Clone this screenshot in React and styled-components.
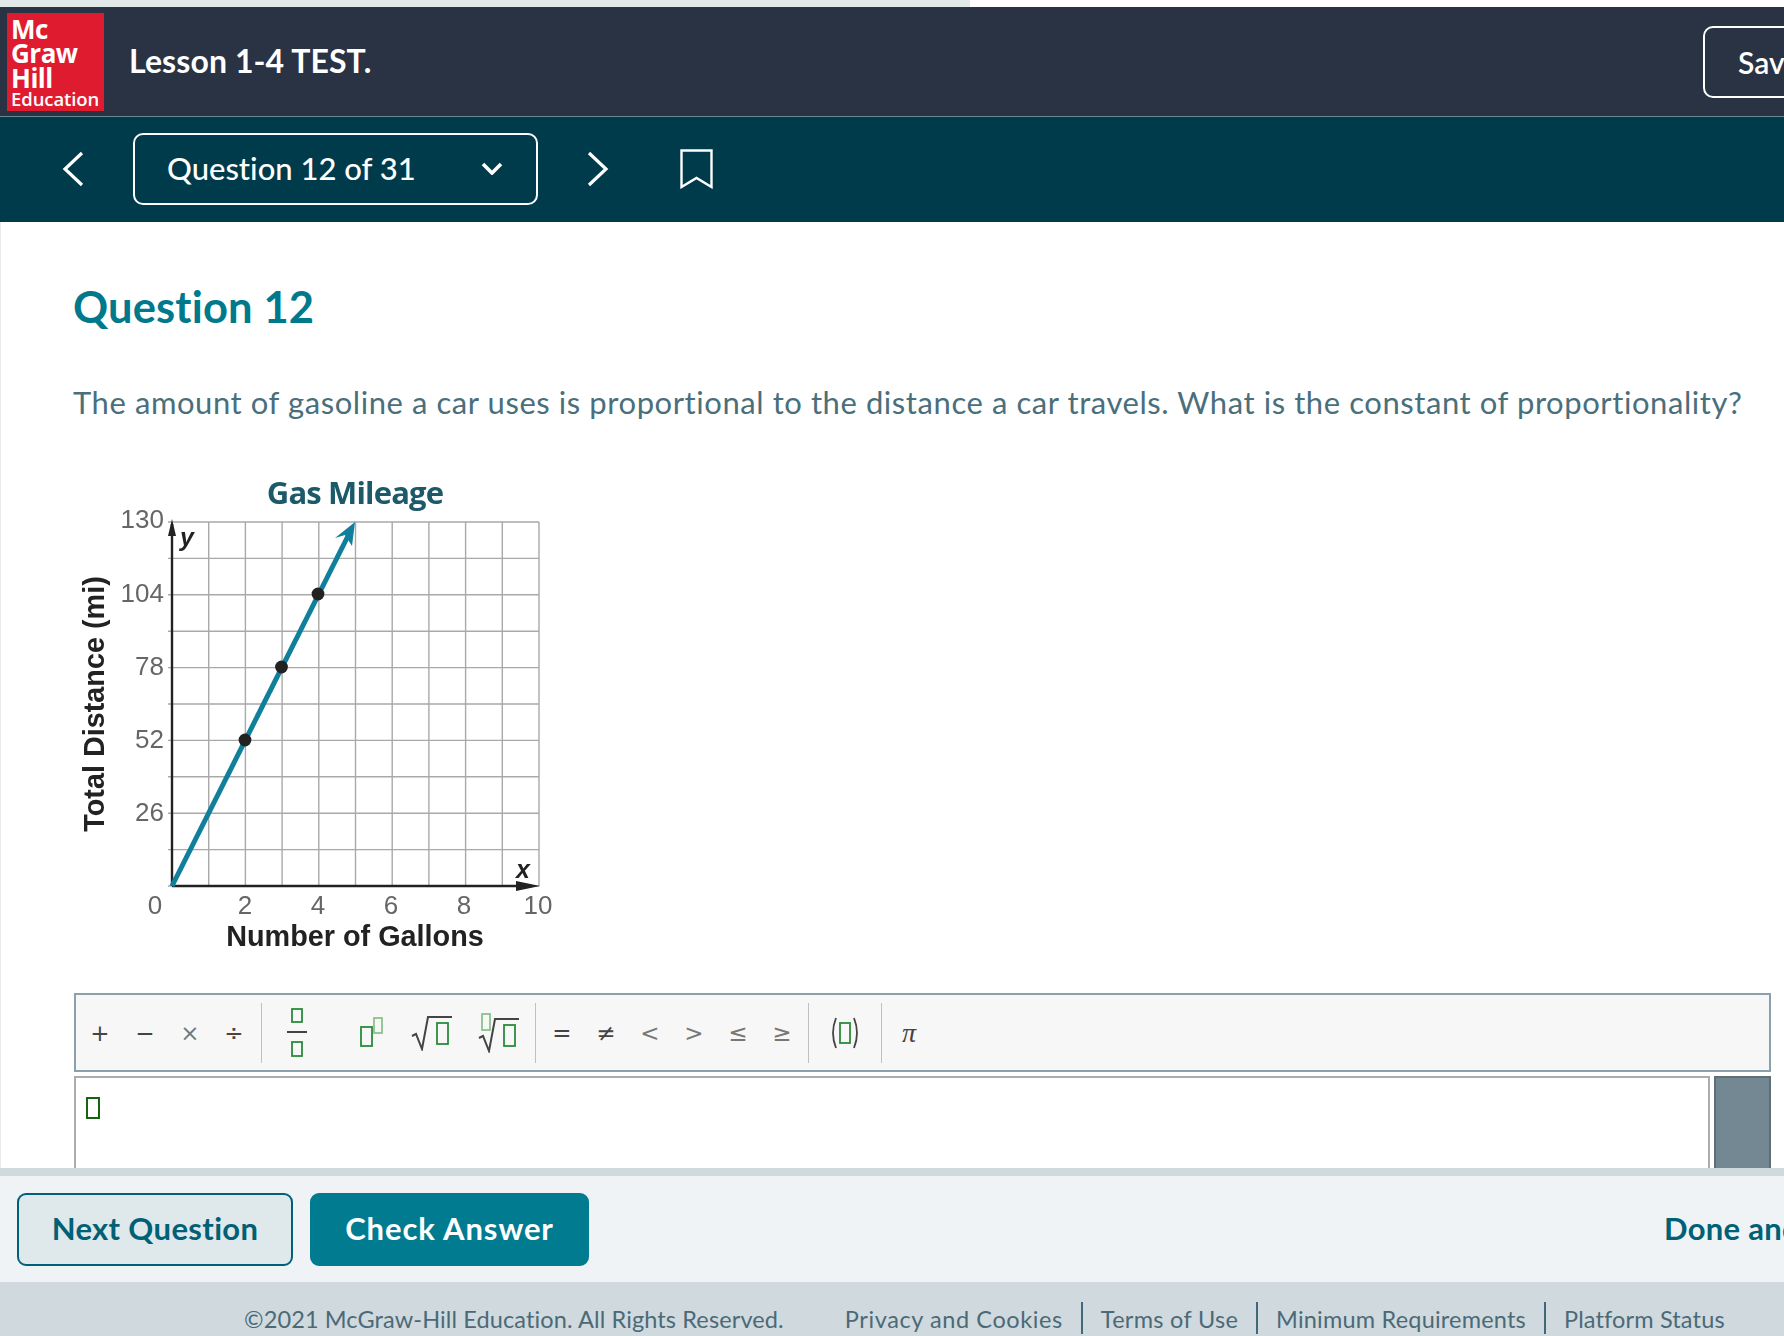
import React from 'react';
import styled, { createGlobalStyle } from 'styled-components';

const FONT = `Lato, "Open Sans", "Liberation Sans", sans-serif`;

const GlobalStyle = createGlobalStyle`
  html, body {
    margin: 0;
    padding: 0;
    background: #fff;
    overflow: hidden;
  }
  * { box-sizing: border-box; }
`;

const Page = styled.div`
  width: 1784px;
  height: 1336px;
  display: flex;
  flex-direction: column;
  overflow: hidden;
  font-family: ${FONT};
  font-variant-ligatures: none;
`;

const TopStrip = styled.div`
  height: 7px;
  flex: none;
  background: #fff;
`;

const Progress = styled.div`
  width: 970px;
  height: 100%;
  background: #e3e8e9;
`;

const Header = styled.header`
  height: 110px;
  flex: none;
  display: flex;
  align-items: center;
  padding-left: 7px;
  background: #2a3343;
  border-bottom: 1px solid #6d8791;
`;

const Logo = styled.div`
  width: 97px;
  height: 98px;
  flex: none;
  padding: 4px 0 0 4px;
  background: #df1b2f;
  color: #fff;
  font-family: "Open Sans", sans-serif;
  font-weight: 700;
  font-size: 26px;
  line-height: 24.5px;
  letter-spacing: -0.5px;
`;

const LogoSmall = styled.div`
  font-size: 18.5px;
  font-weight: 600;
  line-height: 17px;
  letter-spacing: -0.1px;
`;

const LessonTitle = styled.h1`
  flex: 1;
  margin: -2px 0 0 25px;
  color: #fff;
  font-size: 32px;
  font-weight: 700;
  letter-spacing: 0.1px;
`;

const SaveButton = styled.div`
  flex: none;
  width: 200px;
  height: 72px;
  margin-right: -119px;
  padding-left: 33px;
  display: flex;
  align-items: center;
  border: 2px solid #fff;
  border-radius: 10px;
  color: #fff;
  font-size: 30px;
  font-weight: 600;
  white-space: nowrap;
`;

const QuestionNav = styled.nav`
  height: 105px;
  flex: none;
  display: flex;
  align-items: center;
  gap: 49px;
  padding: 0 0 1px 62px;
  background: #003b4c;
`;

const QuestionSelect = styled.div`
  width: 405px;
  height: 72px;
  display: flex;
  align-items: center;
  justify-content: space-between;
  padding: 0 33px 2px 32px;
  border: 2px solid #fff;
  border-radius: 10px;
  color: #fff;
  font-size: 31px;
  font-weight: 500;
`;

const Bookmark = styled.svg`
  margin-left: 22px;
`;

const Content = styled.main`
  flex: 1;
  min-height: 0;
  overflow: hidden;
  padding: 0 13px 0 73px;
  background: #fff;
  border-left: 1px solid #e9eced;
`;

const QuestionHeading = styled.h2`
  margin: 62px 0 0 -1px;
  color: #00798c;
  font-size: 43.5px;
  line-height: 44px;
  font-weight: 700;
  letter-spacing: 0.15px;
`;

const QuestionText = styled.p`
  margin: 54px 0 0 -1px;
  color: #4a6f7c;
  font-size: 31px;
  line-height: 40px;
  letter-spacing: 0.57px;
  white-space: nowrap;
`;

const ChartFigure = styled.svg`
  display: block;
  margin-top: 48px;
  filter: blur(0.4px);
  font-family: "Liberation Sans", sans-serif;
`;

const Toolbar = styled.div`
  margin-top: 33px;
  height: 79px;
  display: flex;
  align-items: center;
  padding-left: 2px;
  background: #f7f7f7;
  border: 2px solid #8ba0ab;
`;

const ToolGroup = styled.div`
  display: flex;
  align-items: center;
  padding: 0 ${p => p.$after}px 0 ${p => p.$before}px;
`;

const ToolButton = styled.div`
  width: ${p => p.$w}px;
  height: 60px;
  flex: none;
  display: flex;
  align-items: center;
  justify-content: center;
  padding-left: ${p => p.$shift || 0}px;
  color: ${p => (p.$light ? '#777' : '#444')};
  font-family: "DejaVu Sans", sans-serif;
  font-size: 23px;
`;

const PiGlyph = styled.span`
  font-family: "Liberation Serif", serif;
  font-style: italic;
  font-size: 28px;
`;

const ToolDivider = styled.div`
  width: 1px;
  height: 60px;
  flex: none;
  background: #bcc1c3;
`;

const EditorRow = styled.div`
  margin-top: 4px;
  display: flex;
  gap: 4px;
  height: 130px;
`;

const Editor = styled.div`
  flex: 1;
  padding: 19px 0 0 10px;
  background: #fff;
  border: 2px solid #a9adae;
`;

const Placeholder = styled.div`
  width: 14px;
  height: 22px;
  border: 2px solid #14650f;
`;

const SideBlock = styled.div`
  width: 57px;
  background: #748893;
  border: 2px solid #5f6f78;
`;

const Divider = styled.div`
  height: 8px;
  flex: none;
  background: #d0d9dd;
`;

const ActionBar = styled.div`
  height: 106px;
  flex: none;
  display: flex;
  align-items: center;
  gap: 17px;
  padding-left: 17px;
  background: #eff3f5;
`;

const ActionButton = styled.div`
  width: ${p => p.$w}px;
  height: 73px;
  display: flex;
  align-items: center;
  justify-content: center;
  padding-bottom: 3px;
  border: 2px solid ${p => (p.$primary ? '#007b90' : '#00607a')};
  border-radius: 9px;
  background: ${p => (p.$primary ? '#007b90' : '#dfe8eb')};
  color: ${p => (p.$primary ? '#fff' : '#006075')};
  font-size: 31px;
  font-weight: 700;
  letter-spacing: ${p => (p.$primary ? '0.9px' : '0.35px')};
`;

const DoneLink = styled.div`
  flex: none;
  width: 240px;
  margin: 0 -120px 3px auto;
  color: #006075;
  font-size: 31px;
  font-weight: 700;
  letter-spacing: 0.3px;
  white-space: nowrap;
`;

const Footer = styled.footer`
  height: 54px;
  flex: none;
  display: flex;
  align-items: flex-end;
  padding: 0 0 2px 244px;
  background: #d0d9dd;
  color: #4a6a78;
  font-size: 23.5px;
  letter-spacing: 0.12px;
  white-space: nowrap;
`;

const Copyright = styled.div`
  margin-right: 61px;
  height: 32px;
  line-height: 34px;
`;

const FooterLink = styled.span`
  height: 32px;
  line-height: 34px;
  padding: 0 18px;
  letter-spacing: ${p => p.$spacing}px;
  border-left: 2px solid #3f6878;
  &:first-of-type {
    padding-left: 0;
    border-left: none;
  }
`;

// green placeholder boxes of the math toolbar
const Box = ({ x, y, w = 11, h = 21, light }) => (
  <rect x={x} y={y} width={w} height={h} fill="none" stroke={light ? '#8cc08c' : '#2b8a3a'} strokeWidth="1.8" />
);

const FractionIcon = () => (
  <svg width="24" height="50" viewBox="0 0 24 50">
    <Box x={7} y={1} w={10} h={13} />
    <line x1="2" y1="24" x2="22" y2="24" stroke="#444" strokeWidth="2" />
    <Box x={7} y={34} w={10} h={14} />
  </svg>
);

const PowerIcon = () => (
  <svg width="26" height="32" viewBox="0 0 26 32">
    <Box x={3} y={10} w={11} h={19} />
    <Box x={16} y={1} w={8} h={15} light />
  </svg>
);

const SqrtIcon = () => (
  <svg width="42" height="36" viewBox="0 0 42 36">
    <path d="M1 21 L5 19 L11 34 L17 2 H41" fill="none" stroke="#444" strokeWidth="2" />
    <Box x={26} y={8} w={11} h={21} />
  </svg>
);

const NthRootIcon = () => (
  <svg width="42" height="40" viewBox="0 0 42 40">
    <path d="M1 25 L5 23 L11 38 L17 6 H41" fill="none" stroke="#444" strokeWidth="2" />
    <Box x={4} y={1} w={8} h={16} light />
    <Box x={26} y={12} w={11} h={21} />
  </svg>
);

const ParenIcon = () => (
  <svg width="32" height="34" viewBox="0 0 32 34">
    <path d="M7 2 Q1 17 7 32 M25 2 Q31 17 25 32" fill="none" stroke="#444" strokeWidth="1.8" />
    <Box x={11} y={7} w={10} h={20} />
  </svg>
);

const GRID_X = Array.from({ length: 11 }, (_, i) => 172 + i * 36.7);
const GRID_Y = Array.from({ length: 11 }, (_, i) => 522 + i * 36.4);
const Y_LABELS = [['130', 519], ['104', 593], ['78', 666], ['52', 739], ['26', 812]];
const X_LABELS = [['0', 155], ['2', 245], ['4', 318], ['6', 391], ['8', 464], ['10', 538]];
const POINTS = [[245, 740], [281.5, 667], [318, 594]];

const GasChart = () => (
  <ChartFigure width="490" height="490" viewBox="74 470 490 490">
    <text x="355" y="504" textAnchor="middle" fontSize="31" fontWeight="700" fill="#1c5a69" fontFamily="'Open Sans', sans-serif" letterSpacing="-0.85">Gas Mileage</text>
    {GRID_X.map(x => <line key={x} x1={x} y1="522" x2={x} y2="886" stroke="#a9a9a9" strokeWidth="1.4" />)}
    {GRID_Y.map(y => <line key={y} x1="168" y1={y} x2="539" y2={y} stroke="#a9a9a9" strokeWidth="1.4" />)}
    <line x1="172" y1="524" x2="172" y2="886" stroke="#222" strokeWidth="2.4" />
    <line x1="172" y1="886" x2="532" y2="886" stroke="#222" strokeWidth="2.4" />
    <path d="M172 519 L168 536 H176 Z" fill="#222" />
    <path d="M540 886 L516 881 V891 Z" fill="#222" />
    <line x1="172" y1="886" x2="350" y2="532" stroke="#0f7f9b" strokeWidth="5" />
    <path d="M355 522 L352 546 L345 535 L335 538 Z" fill="#0f7f9b" />
    {POINTS.map(([x, y]) => <circle key={x} cx={x} cy={y} r="6.4" fill="#222" />)}
    {Y_LABELS.map(([t, y]) => <text key={t} x="164" y={y + 9} textAnchor="end" fontSize="26" fill="#666">{t}</text>)}
    {X_LABELS.map(([t, x]) => <text key={t} x={x} y="914" textAnchor="middle" fontSize="26" fill="#666">{t}</text>)}
    <text x="355" y="946" textAnchor="middle" fontSize="28.8" fontWeight="700" fill="#222">Number of Gallons</text>
    <text x="0" y="0" transform="translate(104 704) rotate(-90)" textAnchor="middle" fontSize="28.8" fontWeight="700" fill="#222">Total Distance (mi)</text>
    <text x="187" y="546" textAnchor="middle" fontSize="25" fontWeight="700" fontStyle="italic" fill="#222">y</text>
    <text x="523" y="878" textAnchor="middle" fontSize="25" fontWeight="700" fontStyle="italic" fill="#222">x</text>
  </ChartFigure>
);

export default function App() {
  return (
    <Page>
      <GlobalStyle />
      <TopStrip><Progress /></TopStrip>

      <Header>
        <Logo>
          Mc<br />Graw<br />Hill
          <LogoSmall>Education</LogoSmall>
        </Logo>
        <LessonTitle>Lesson 1-4 TEST.</LessonTitle>
        <SaveButton>Save &amp; Exit</SaveButton>
      </Header>

      <QuestionNav>
        <svg width="22" height="36" viewBox="0 0 22 36">
          <polyline points="20,2 3,18 20,34" fill="none" stroke="#fff" strokeWidth="3.2" />
        </svg>
        <QuestionSelect>
          Question 12 of 31
          <svg width="22" height="13" viewBox="0 0 22 13">
            <polyline points="2,2 11,11 20,2" fill="none" stroke="#fff" strokeWidth="3.6" />
          </svg>
        </QuestionSelect>
        <svg width="22" height="36" viewBox="0 0 22 36">
          <polyline points="2,2 19,18 2,34" fill="none" stroke="#fff" strokeWidth="3.2" />
        </svg>
        <Bookmark width="33" height="40" viewBox="0 0 33 40">
          <path d="M1.5 1.5 H31.5 V38 L16.5 29 L1.5 38 Z" fill="none" stroke="#fff" strokeWidth="2.4" />
        </Bookmark>
      </QuestionNav>

      <Content>
        <QuestionHeading>Question 12</QuestionHeading>
        <QuestionText>
          The amount of gasoline a car uses is proportional to the distance a car travels. What is the constant of proportionality?
        </QuestionText>
        <GasChart />

        <Toolbar>
          <ToolGroup $before={0} $after={5}>
            <ToolButton $w={44}>+</ToolButton>
            <ToolButton $w={46}>−</ToolButton>
            <ToolButton $w={44} $light>×</ToolButton>
            <ToolButton $w={44}>÷</ToolButton>
          </ToolGroup>
          <ToolDivider />
          <ToolGroup $before={0} $after={0}>
            <ToolButton $w={70}><FractionIcon /></ToolButton>
            <ToolButton $w={78}><PowerIcon /></ToolButton>
            <ToolButton $w={44}><SqrtIcon /></ToolButton>
            <ToolButton $w={81} $shift={8}><NthRootIcon /></ToolButton>
          </ToolGroup>
          <ToolDivider />
          <ToolGroup $before={4} $after={4}>
            <ToolButton $w={44}>=</ToolButton>
            <ToolButton $w={44}>≠</ToolButton>
            <ToolButton $w={44} $light>&lt;</ToolButton>
            <ToolButton $w={44} $light>&gt;</ToolButton>
            <ToolButton $w={44} $light>≤</ToolButton>
            <ToolButton $w={44} $light>≥</ToolButton>
          </ToolGroup>
          <ToolDivider />
          <ToolGroup $before={0} $after={0}>
            <ToolButton $w={72}><ParenIcon /></ToolButton>
          </ToolGroup>
          <ToolDivider />
          <ToolGroup $before={0} $after={0}>
            <ToolButton $w={54}><PiGlyph>π</PiGlyph></ToolButton>
          </ToolGroup>
        </Toolbar>

        <EditorRow>
          <Editor><Placeholder /></Editor>
          <SideBlock />
        </EditorRow>
      </Content>

      <Divider />

      <ActionBar>
        <ActionButton $w={276}>Next Question</ActionButton>
        <ActionButton $w={279} $primary>Check Answer</ActionButton>
        <DoneLink>Done and Submit</DoneLink>
      </ActionBar>

      <Footer>
        <Copyright>©2021 McGraw-Hill Education. All Rights Reserved.</Copyright>
        <FooterLink $spacing={0.6}>Privacy and Cookies</FooterLink>
        <FooterLink $spacing={0.3}>Terms of Use</FooterLink>
        <FooterLink $spacing={0.2}>Minimum Requirements</FooterLink>
        <FooterLink $spacing={0.15}>Platform Status</FooterLink>
      </Footer>
    </Page>
  );
}
